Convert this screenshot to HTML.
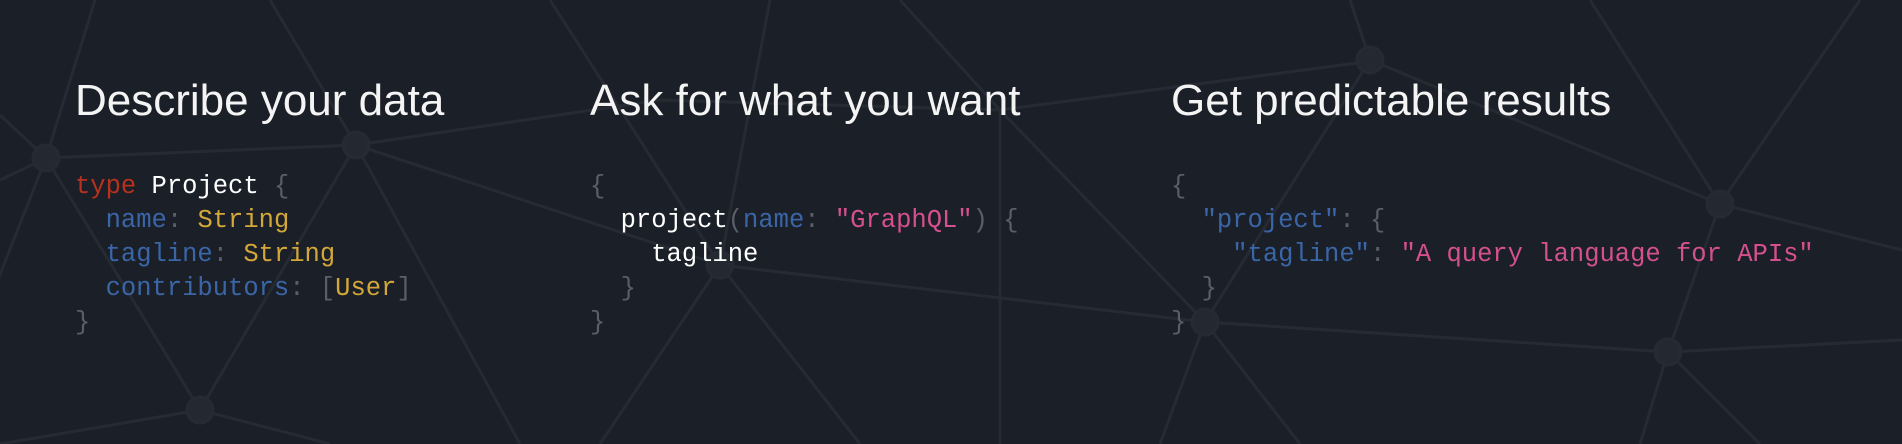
<html><head><style>
body{margin:0;width:1902px;height:444px;background:#1b1f27;overflow:hidden;position:relative;font-family:"Liberation Sans",sans-serif}
svg{position:absolute;left:0;top:0}
.col{position:absolute;top:0}
h2{margin:0;position:absolute;top:76px;white-space:nowrap;font-weight:normal;font-size:44px;color:#f4f4f4;letter-spacing:0}
pre{margin:0;position:absolute;top:170px;font-family:"Liberation Mono",monospace;font-size:25.5px;line-height:34px;color:#5a5e66}
.k{color:#b7321e}.w{color:#fff}.b{color:#3a66a8}.y{color:#d3a839}.p{color:#d4508e}
</style></head><body>
<svg width="1902" height="444" stroke="#262b33" stroke-width="3" fill="#242931">
<g fill="none">
<path d="M0 115 L46 158 L356 145 L200 410 L46 158 L0 180"/>
<path d="M46 158 L95 0 M356 145 L270 0 M356 145 L720 265 L1205 322 L1668 352 L1902 340"/>
<path d="M46 158 L-10 300 M356 145 L520 444 M200 410 L0 444 M200 410 L330 444"/>
<path d="M720 265 L770 0 M720 265 L860 444 M720 265 L600 444 M720 265 L550 0"/>
<path d="M1000 110 L1000 444 M1000 110 L1205 322 M1000 110 L900 0 M1000 110 L1380 60"/>
<path d="M1205 322 L1370 60 L1720 204 L1902 250 M1205 322 L1160 444 M1205 322 L1300 444"/>
<path d="M1720 204 L1668 352 L1640 444 M1668 352 L1760 444 M1720 204 L1860 0 M1370 60 L1350 0 M1720 204 L1590 0"/>
<path d="M356 145 L660 100 L1000 110"/>
</g>
<circle cx="46" cy="158" r="13"/><circle cx="356" cy="145" r="13"/><circle cx="200" cy="410" r="13"/>
<circle cx="720" cy="265" r="13"/><circle cx="1205" cy="322" r="13"/><circle cx="1668" cy="352" r="13"/>
<circle cx="1720" cy="204" r="13"/><circle cx="1370" cy="60" r="13"/>
</svg>
<div class="col" style="left:75px"><h2>Describe your data</h2>
<pre><span class="k">type</span> <span class="w">Project</span> {
  <span class="b">name</span>: <span class="y">String</span>
  <span class="b">tagline</span>: <span class="y">String</span>
  <span class="b">contributors</span>: [<span class="y">User</span>]
}</pre></div>
<div class="col" style="left:590px"><h2>Ask for what you want</h2>
<pre>{
  <span class="w">project</span>(<span class="b">name</span>: <span class="p">"GraphQL"</span>) {
    <span class="w">tagline</span>
  }
}</pre></div>
<div class="col" style="left:1171px"><h2>Get predictable results</h2>
<pre>{
  <span class="b">"project"</span>: {
    <span class="b">"tagline"</span>: <span class="p">"A query language for APIs"</span>
  }
}</pre></div>
</body></html>
